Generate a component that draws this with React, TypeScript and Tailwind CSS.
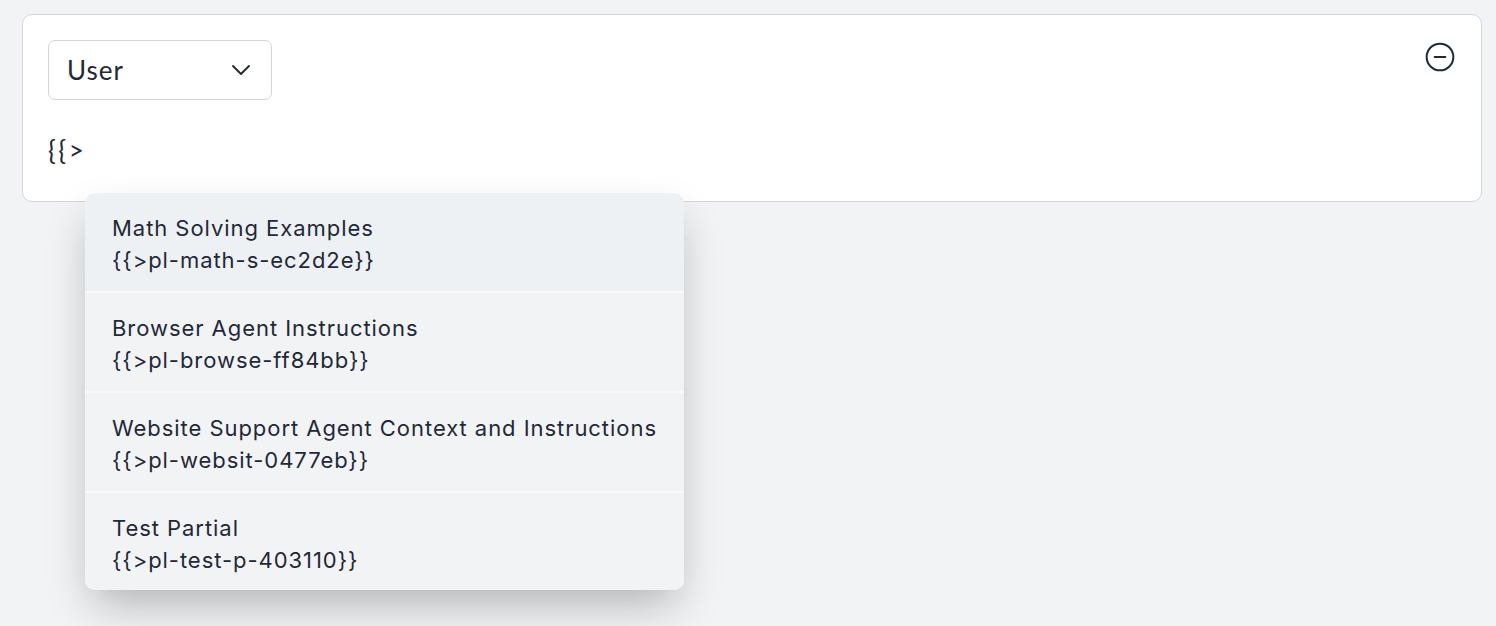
import { ChevronDown, CircleMinus } from "lucide-react";

const partials = [
  { name: "Math Solving Examples", tag: "{{>pl-math-s-ec2d2e}}" },
  { name: "Browser Agent Instructions", tag: "{{>pl-browse-ff84bb}}" },
  { name: "Website Support Agent Context and Instructions", tag: "{{>pl-websit-0477eb}}" },
  { name: "Test Partial", tag: "{{>pl-test-p-403110}}" },
];

const App = () => {
  return (
    <div className="h-[626px] w-full bg-[#f2f3f5] px-[22px] pt-[14px]">
      <div className="relative">
        {/* 메시지 카드 */}
        <div className="flex h-[188px] w-[1460px] justify-between rounded-[10px] border border-[#d4d6da] bg-white pt-[25px] pr-[25px] pl-[25px]">
          <div className="flex flex-col">
            <button className="flex h-[60px] w-[224px] items-center justify-between rounded-[7px] border border-[#d1d5db] bg-white pr-[14px] pl-[18px] font-['Lato',sans-serif] text-[26px] tracking-[1px] text-[#1f2937]">
              <span>User</span>
              <ChevronDown size={32} strokeWidth={1.4} className="text-[#1f2937]" />
            </button>
            <div className="mt-[34px] font-['Lato',sans-serif] text-[26px] leading-[32px] tracking-[2.5px] text-[#1f2937]">{"{{>"}</div>
          </div>
          <CircleMinus size={32} strokeWidth={1.5} className="mt-[1px] text-[#1f2937]" />
        </div>

        {/* 파셜 자동완성 메뉴 */}
        <div className="absolute top-[179px] left-[63px] w-[599px] overflow-hidden rounded-[10px] bg-white shadow-[0_20px_45px_-8px_rgba(0,0,0,0.28)]">
          {partials.map((p, i) => (
            <div
              key={p.tag}
              className={`flex flex-col justify-center px-[27px] pt-[4px] font-['Inter',sans-serif] text-[22px] leading-[32px] tracking-[0.95px] text-[#1f2937] ${
                i === 0 ? "bg-[#edf1f4]" : "bg-[#f2f3f5]"
              } ${i < partials.length - 1 ? "h-[100px] border-b-2 border-[#f8f9fa]" : "h-[97px]"}`}
            >
              <div>{p.name}</div>
              <div>{p.tag}</div>
            </div>
          ))}
        </div>
      </div>
    </div>
  );
};

export default App;
